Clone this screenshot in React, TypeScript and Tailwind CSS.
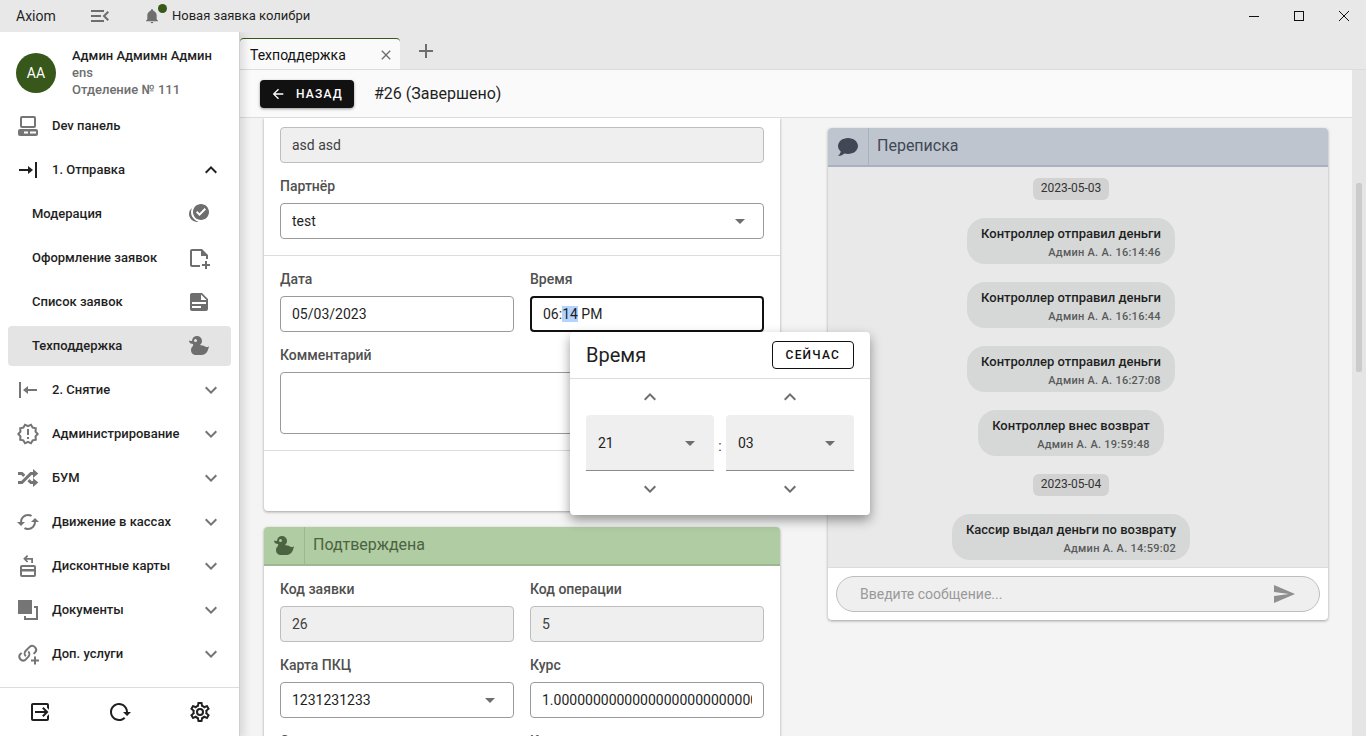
import React, { useEffect, useRef, useState } from 'react';

/**
 * ========================================
 * Icons (24x24)
 * ========================================
 */
const icons = {
  menuOpen: 'M21,15.61L19.59,17L14.58,12L19.59,7L21,8.39L17.44,12L21,15.61M3,6H16V8H3V6M3,13V11H13V13H3M3,18V16H16V18H3Z',
  bell: 'M21,19V20H3V19L5,17V11C5,7.9 7.03,5.17 10,4.29C10,4.19 10,4.1 10,4A2,2 0 0,1 12,2A2,2 0 0,1 14,4C14,4.1 14,4.19 14,4.29C16.97,5.17 19,7.9 19,11V17L21,19M14,21A2,2 0 0,1 12,23A2,2 0 0,1 10,21',
  desktop: 'M6,2H18A2,2 0 0,1 20,4V12A2,2 0 0,1 18,14H6A2,2 0 0,1 4,12V4A2,2 0 0,1 6,2M6,4V12H18V4H6M4,15H20A2,2 0 0,1 22,17V20A2,2 0 0,1 20,22H4A2,2 0 0,1 2,20V17A2,2 0 0,1 4,15M8,17.5V19.5H12V17.5H8M14,17.5V19.5H20V17.5H14Z',
  toRight: 'M3,11H12V8L17,12L12,16V13H3V11M19,4H21V20H19V4Z',
  fromRight: 'M21,11H12V8L7,12L12,16V13H21V11M3,4H5V20H3V4Z',
  checks: 'M14,2C18.42,2 22,5.58 22,10C22,14.42 18.42,18 14,18C9.58,18 6,14.42 6,10C6,5.58 9.58,2 14,2M12.5,14L19,7.5L17.6,6.1L12.5,11.2L10.4,9.1L9,10.5L12.5,14M5,6C4.4,7.2 4,8.6 4,10C4,14.6 7.2,18.5 11.5,19.7C10.9,19.9 10.2,20 9.5,20C5.2,19.3 2,15.9 2,12C2,9.6 3.2,7.4 5,6Z',
  notePlus: 'M5,3H15L21,9V13H19V10H14V5H5V19H13V21H5C3.89,21 3,20.1 3,19V5C3,3.89 3.89,3 5,3M18,15H20V18H23V20H20V23H18V20H15V18H18V15Z',
  noteText: 'M14,10H19.5L14,4.5V10M5,3H15L21,9V19A2,2 0 0,1 19,21H5C3.89,21 3,20.1 3,19V5C3,3.89 3.89,3 5,3M5,12V14H19V12H5M5,16V18H14V16H5Z',
  duck: 'M8.5,5A1.5,1.5 0 0,0 7,6.5A1.5,1.5 0 0,0 8.5,8A1.5,1.5 0 0,0 10,6.5A1.5,1.5 0 0,0 8.5,5M10,2A5,5 0 0,1 15,7C15,8.7 14.15,10.2 12.86,11.1C14.44,11.25 16.22,11.61 18,12.5C21,14 22,12 22,12C22,12 21,21 15,21H9C9,21 4,21 4,16C4,13 7,12 6,10C2,10 2,6.5 2,6.5C3,7 4.24,7 5,6.65C5.19,4.05 7.36,2 10,2Z',
  alert: 'M23,12L20.56,14.78L20.9,18.46L17.29,19.28L15.4,22.46L12,21L8.6,22.47L6.71,19.29L3.1,18.47L3.44,14.78L1,12L3.44,9.21L3.1,5.53L6.71,4.72L8.6,1.54L12,3L15.4,1.54L17.29,4.72L20.9,5.54L20.56,9.22L23,12M20.33,12L18.5,9.89L18.74,7.1L16,6.5L14.58,4.07L12,5.18L9.42,4.07L8,6.5L5.26,7.09L5.5,9.88L3.67,12L5.5,14.1L5.26,16.9L8,17.5L9.42,19.93L12,18.81L14.58,19.92L16,17.5L18.74,16.89L18.5,14.1L20.33,12M11,15H13V17H11V15M11,7H13V13H11V7',
  shuffle: 'M17,3L22.25,7.5L17,12L22.25,16.5L17,21V18H14.26L11.44,15.18L13.56,13.06L15.5,15H17V12L17,9H15.5L6.5,18H2V15H5.26L14.26,6H17V3M2,6H6.5L9.32,8.82L7.2,10.94L5.26,9H2V6Z',
  cached: 'M19,8L15,12H18A6,6 0 0,1 12,18C11,18 10.03,17.75 9.2,17.3L7.74,18.76C8.97,19.54 10.43,20 12,20A8,8 0 0,0 20,12H23M6,12A6,6 0 0,1 12,6C13,6 13.97,6.25 14.8,6.7L16.26,5.24C15.03,4.46 13.57,4 12,4A8,8 0 0,0 4,12H1L5,16L9,12',
  cardRefund: 'M6,11H18A2,2 0 0,1 20,13V21A2,2 0 0,1 18,23H6A2,2 0 0,1 4,21V13A2,2 0 0,1 6,11M6,13V15H18V13H6M6,17.5V21H18V17.5H6M11,1L12.2,2.2L10.6,3.9H17V9H15.2V5.7H10.6L12.2,7.4L11,8.6L7.2,4.8L11,1Z',
  bringFront: 'M2,2H16V16H2V2M22,8V22H8V18H10V20H20V10H18V8H22Z',
  exit: 'M14.08,15.59L16.67,13H7V11H16.67L14.08,8.41L15.5,7L20.5,12L15.5,17L14.08,15.59M19,3A2,2 0 0,1 21,5V9.67L19,7.67V5H5V19H19V16.33L21,14.33V19A2,2 0 0,1 19,21H5C3.89,21 3,20.1 3,19V5C3,3.89 3.89,3 5,3H19Z',
  reload: 'M2 12C2 16.97 6.03 21 11 21C13.39 21 15.68 20.06 17.4 18.4L15.9 16.9C14.63 18.25 12.86 19 11 19C4.76 19 1.64 11.46 6.05 7.05C10.46 2.64 18 5.77 18 12H15L19 16H19.1L23 12H20C20 7.03 15.97 3 11 3C6.03 3 2 7.03 2 12Z',
  cog: 'M12,8A4,4 0 0,1 16,12A4,4 0 0,1 12,16A4,4 0 0,1 8,12A4,4 0 0,1 12,8M12,10A2,2 0 0,0 10,12A2,2 0 0,0 12,14A2,2 0 0,0 14,12A2,2 0 0,0 12,10M10,22C9.75,22 9.54,21.82 9.5,21.58L9.13,18.93C8.5,18.68 7.96,18.34 7.44,17.94L4.95,18.95C4.73,19.03 4.46,18.95 4.34,18.73L2.34,15.27C2.21,15.05 2.27,14.78 2.46,14.63L4.57,12.97L4.5,12L4.57,11L2.46,9.37C2.27,9.22 2.21,8.95 2.34,8.73L4.34,5.27C4.46,5.05 4.73,4.96 4.95,5.05L7.44,6.05C7.96,5.66 8.5,5.32 9.13,5.07L9.5,2.42C9.54,2.18 9.75,2 10,2H14C14.25,2 14.46,2.18 14.5,2.42L14.87,5.07C15.5,5.32 16.04,5.66 16.56,6.05L19.05,5.05C19.27,4.96 19.54,5.05 19.66,5.27L21.66,8.73C21.79,8.95 21.73,9.22 21.54,9.37L19.43,11L19.5,12L19.43,13L21.54,14.63C21.73,14.78 21.79,15.05 21.66,15.27L19.66,18.73C19.54,18.95 19.27,19.04 19.05,18.95L16.56,17.95C16.04,18.34 15.5,18.68 14.87,18.93L14.5,21.58C14.46,21.82 14.25,22 14,22H10M11.25,4L10.88,6.61C9.68,6.86 8.62,7.5 7.85,8.39L5.44,7.35L4.69,8.65L6.8,10.2C6.4,11.37 6.4,12.64 6.8,13.8L4.68,15.36L5.43,16.66L7.86,15.62C8.63,16.5 9.68,17.14 10.87,17.38L11.24,20H12.76L13.13,17.39C14.32,17.14 15.37,16.5 16.14,15.62L18.57,16.66L19.32,15.36L17.2,13.81C17.6,12.64 17.6,11.37 17.2,10.2L19.31,8.65L18.56,7.35L16.15,8.39C15.38,7.5 14.32,6.86 13.12,6.62L12.75,4H11.25Z',
  chevronDown: 'M7.41,8.58L12,13.17L16.59,8.58L18,10L12,16L6,10L7.41,8.58Z',
  chevronUp: 'M7.41,15.41L12,10.83L16.59,15.41L18,14L12,8L6,14L7.41,15.41Z',
  arrowLeft: 'M20,11V13H8L13.5,18.5L12.08,19.92L4.16,12L12.08,4.08L13.5,5.5L8,11H20Z',
  menuDown: 'M7,10L12,15L17,10H7Z',
  close: 'M19,6.41L17.59,5L12,10.59L6.41,5L5,6.41L10.59,12L5,17.59L6.41,19L12,13.41L17.59,19L19,17.59L13.41,12L19,6.41Z',
  plus: 'M19,13H13V19H11V13H5V11H11V5H13V11H19V13Z',
  chat: 'M12,3C17.5,3 22,6.58 22,11C22,15.42 17.5,19 12,19C10.76,19 9.57,18.82 8.47,18.5C5.55,21 2,21 2,21C4.33,18.67 4.7,17.1 4.75,16.5C3.05,15.07 2,13.13 2,11C2,6.58 6.5,3 12,3Z',
  send: 'M2,21L23,12L2,3V10L17,12L2,14V21Z',
};

const Icon: React.FC<{ path: string; className?: string }> = ({ path, className = 'size-6' }) => (
  <svg viewBox="0 0 24 24" fill="currentColor" fillRule="evenodd" className={`shrink-0 ${className}`}>
    <path d={path} />
  </svg>
);

const LinkPlusIcon: React.FC = () => (
  <svg viewBox="0 0 24 24" fill="none" stroke="currentColor" strokeWidth="2" className="size-6 shrink-0">
    <path d="M9.8 14.2 A3.9 3.9 0 0 1 9.8 8.7 L13.6 4.9 A3.9 3.9 0 0 1 19.1 10.4 L17.6 11.9" />
    <path d="M12.2 9.4 A3.9 3.9 0 0 1 12.2 14.9 L9 18.1 A3.9 3.9 0 0 1 3.9 12.6 L5.6 10.9" />
    <path d="M19 14.5V22.5M15 18.5H23" />
  </svg>
);

/**
 * ========================================
 * Sidebar
 * ========================================
 */
const sections = [
  { title: '2. Снятие', icon: <Icon path={icons.fromRight} /> },
  { title: 'Администрирование', icon: <Icon path={icons.alert} /> },
  { title: 'БУМ', icon: <Icon path={icons.shuffle} /> },
  { title: 'Движение в кассах', icon: <Icon path={icons.cached} /> },
  { title: 'Дисконтные карты', icon: <Icon path={icons.cardRefund} /> },
  { title: 'Документы', icon: <Icon path={icons.bringFront} /> },
  { title: 'Доп. услуги', icon: <LinkPlusIcon /> },
];

const subItems = [
  { title: 'Модерация', path: icons.checks },
  { title: 'Оформление заявок', path: icons.notePlus },
  { title: 'Список заявок', path: icons.noteText },
  { title: 'Техподдержка', path: icons.duck },
];

const Sidebar: React.FC = () => {
  const [active, setActive] = useState('Техподдержка');

  return (
    <aside className="relative z-10 flex w-60 shrink-0 flex-col border-r border-[#d0d0d0] bg-white shadow-[4px_2px_8px_rgba(0,0,0,0.12)]">
      <div className="flex h-[74px] shrink-0 items-center gap-4 px-4 pt-2">
        <div className="flex size-10 items-center justify-center rounded-full bg-[#38571a] text-sm text-white">АА</div>
        <div className="pb-px text-[13px] leading-[17px] font-medium text-[#6e6e6e]">
          <div className="text-[#1f1f1f]">Админ Адмимн Админ</div>
          <div>ens</div>
          <div>Отделение № 111</div>
        </div>
      </div>

      <nav className="flex flex-1 flex-col gap-1 overflow-hidden px-2 text-[13px] font-medium text-[#1f1f1f]">
        <button className="flex h-10 shrink-0 items-center gap-3 px-2">
          <span className="text-[#757575]"><Icon path={icons.desktop} /></span>
          Dev панель
        </button>
        <button className="flex h-10 shrink-0 items-center gap-3 px-2">
          <Icon path={icons.toRight} />
          <span className="flex-1 text-left">1. Отправка</span>
          <Icon path={icons.chevronUp} />
        </button>
        {subItems.map((item) => (
          <button
            key={item.title}
            onClick={() => setActive(item.title)}
            className={`flex h-10 shrink-0 items-center justify-between rounded pr-5 pl-6 ${
              active === item.title ? 'bg-[#e4e4e4]' : ''
            }`}
          >
            {item.title}
            <span className="text-[#6e6e6e]"><Icon path={item.path} /></span>
          </button>
        ))}
        {sections.map((section) => (
          <button key={section.title} className="flex h-10 shrink-0 items-center gap-3 px-2">
            <span className="text-[#757575]">{section.icon}</span>
            <span className="flex-1 text-left">{section.title}</span>
            <span className="text-[#757575]"><Icon path={icons.chevronDown} /></span>
          </button>
        ))}
      </nav>

      <div className="flex h-[49px] shrink-0 items-center justify-between border-t border-[#dcdcdc] pr-[27px] pl-7 text-[#1f1f1f]">
        <button aria-label="Выход"><Icon path={icons.exit} /></button>
        <button aria-label="Обновить"><Icon path={icons.reload} /></button>
        <button aria-label="Настройки"><Icon path={icons.cog} /></button>
      </div>
    </aside>
  );
};

/**
 * ========================================
 * Form fields
 * ========================================
 */
const labelClass = 'mb-[6px] block text-sm leading-[22px] font-medium text-[#505050]';
const inputClass =
  'block h-9 w-full rounded border border-[#9a9a9a] bg-white px-[11px] text-sm text-[#1f1f1f] outline-none disabled:border-[#bdbdbd] disabled:bg-[#efefef] disabled:text-[#404040]';

const TextField: React.FC<{ id: string; label: string; value: string; disabled?: boolean }> = ({
  id,
  label,
  value,
  disabled,
}) => (
  <div>
    <label htmlFor={id} className={labelClass}>{label}</label>
    <input id={id} type="text" defaultValue={value} disabled={disabled} className={inputClass} />
  </div>
);

const SelectField: React.FC<{ id: string; label: string; value: string }> = ({ id, label, value }) => (
  <div>
    <label htmlFor={id} className={labelClass}>{label}</label>
    <div className="relative">
      <select id={id} className={`${inputClass} appearance-none`}>
        <option>{value}</option>
      </select>
      <Icon path={icons.menuDown} className="pointer-events-none absolute top-1.5 right-3 size-6 text-[#6e6e6e]" />
    </div>
  </div>
);

const TimeColumn: React.FC<{ label: string; value: string }> = ({ label, value }) => (
  <div className="flex flex-1 flex-col items-center">
    <button aria-label={`${label} +`} className="flex h-9 items-center text-[#6e6e6e]">
      <Icon path={icons.chevronUp} />
    </button>
    <div className="relative w-full">
      <select
        aria-label={label}
        className="block h-14 w-full appearance-none rounded-t border-b border-[#8a8a8a] bg-[#efefef] px-3 text-sm text-[#1f1f1f] outline-none"
      >
        <option>{value}</option>
      </select>
      <Icon path={icons.menuDown} className="pointer-events-none absolute top-4 right-3 size-6 text-[#6e6e6e]" />
    </div>
    <button aria-label={`${label} -`} className="flex h-9 items-center text-[#6e6e6e]">
      <Icon path={icons.chevronDown} />
    </button>
  </div>
);

const TimeField: React.FC = () => {
  const ref = useRef<HTMLInputElement>(null);

  useEffect(() => {
    ref.current?.focus();
    ref.current?.setSelectionRange(3, 5);
  }, []);

  return (
    <div>
      <label htmlFor="time" className={labelClass}>Время</label>
      <div className="relative">
        <input
          id="time"
          ref={ref}
          type="text"
          defaultValue="06:14 PM"
          className="block h-9 w-full rounded border-2 border-[#111] bg-white px-[11px] text-sm text-[#1f1f1f] outline-none selection:bg-[#b3d4ff] selection:text-[#1f1f1f]"
        />
        <div className="absolute top-full left-10 z-20 w-[300px] rounded bg-white shadow-[0_5px_12px_rgba(0,0,0,0.4)]">
          <div className="flex h-[47px] items-center justify-between border-b border-[#dcdcdc] px-4">
            <h2 className="text-xl text-[#1f1f1f]">Время</h2>
            <button className="h-7 rounded border border-[#111] px-[13px] text-xs font-medium tracking-widest text-[#111]">
              СЕЙЧАС
            </button>
          </div>
          <div className="flex items-center px-4 pb-2">
            <TimeColumn label="Часы" value="21" />
            <span className="w-3 pt-1.5 text-center text-sm text-[#404040]">:</span>
            <TimeColumn label="Минуты" value="03" />
          </div>
        </div>
      </div>
    </div>
  );
};

/**
 * ========================================
 * Chat
 * ========================================
 */
const chatDays = [
  {
    date: '2023-05-03',
    messages: [
      { text: 'Контроллер отправил деньги', time: '16:14:46' },
      { text: 'Контроллер отправил деньги', time: '16:16:44' },
      { text: 'Контроллер отправил деньги', time: '16:27:08' },
      { text: 'Контроллер внес возврат', time: '19:59:48' },
    ],
  },
  {
    date: '2023-05-04',
    messages: [{ text: 'Кассир выдал деньги по возврату', time: '14:59:02' }],
  },
];

const Chat: React.FC = () => (
  <section className="mt-2.5 w-[500px] shrink-0 self-start overflow-hidden rounded bg-white shadow-[0_1px_3px_rgba(0,0,0,0.35)]">
    <header className="flex h-[39px] border-b-2 border-[#a8b1be] bg-[#bec5cf] text-[#3f4854]">
      <div className="flex w-[41px] items-center justify-center border-r border-[#a8b1be]">
        <Icon path={icons.chat} />
      </div>
      <h2 className="px-2 text-base leading-9">Переписка</h2>
    </header>
    <div className="flex flex-col items-center gap-[18px] bg-[#e9e9e9] pt-[11px] pr-3.5 pb-[7px]">
      {chatDays.map((day) => (
        <React.Fragment key={day.date}>
          <div className="h-[22px] rounded-md bg-[#d2d2d2] px-2 text-xs leading-[21px] text-[#333]">{day.date}</div>
          {day.messages.map((m) => (
            <div key={m.time} className="rounded-[18px] bg-[#d5d8d7] px-3.5 pt-1.5 pb-0.5 text-right font-medium">
              <div className="text-[13px] leading-5 text-[#1f1f1f]">{m.text}</div>
              <div className="text-[11px] leading-[18px] tracking-wide text-[#5a5a5a]">Админ А. А. {m.time}</div>
            </div>
          ))}
        </React.Fragment>
      ))}
    </div>
    <form className="border-t border-[#dcdcdc] p-2" onSubmit={(e) => e.preventDefault()}>
      <div className="flex h-9 items-center justify-between rounded-full border border-[#bdbdbd] bg-[#efefef] px-[23px] text-[#8f8f8f]">
        <input
          type="text"
          aria-label="Сообщение"
          placeholder="Введите сообщение..."
          className="min-w-0 flex-1 bg-transparent text-sm outline-none placeholder:text-[#999]"
        />
        <button aria-label="Отправить"><Icon path={icons.send} /></button>
      </div>
    </form>
  </section>
);

/**
 * ========================================
 * Main App
 * ========================================
 */
const App: React.FC = () => {
  return (
    <div className="flex h-screen flex-col overflow-hidden bg-[#e8e8e8] font-[Roboto,'Noto_Sans',sans-serif]">
      {/* Title bar */}
      <div className="flex h-8 shrink-0 items-center text-[#1f1f1f]">
        <span className="w-[88px] pl-4 text-sm">Axiom</span>
        <button aria-label="Меню" className="text-[#6e6e6e]"><Icon path={icons.menuOpen} /></button>
        <div className="ml-8 flex items-center gap-3 text-[13px]">
          <span className="relative text-[#6e6e6e]">
            <Icon path={icons.bell} className="size-4" />
            <span className="absolute -top-1 -right-[7px] size-[9px] rounded-full bg-[#38571a]" />
          </span>
          Новая заявка колибри
        </div>
        <div className="ml-auto flex">
          <button aria-label="Свернуть" className="flex h-8 w-[45px] items-center justify-center">
            <span className="h-px w-2.5 bg-[#111]" />
          </button>
          <button aria-label="Развернуть" className="flex h-8 w-[45px] items-center justify-center">
            <span className="size-2.5 border border-[#111]" />
          </button>
          <button aria-label="Закрыть" className="flex h-8 w-[45px] items-center justify-center">
            <svg viewBox="0 0 10 10" className="size-2.5" stroke="#111" strokeWidth="1">
              <path d="M0 0L10 10M10 0L0 10" />
            </svg>
          </button>
        </div>
      </div>

      <div className="flex min-h-0 flex-1 overflow-hidden">
        <Sidebar />

        <main className="flex min-w-0 flex-1 flex-col">
          {/* Tabs */}
          <div className="flex h-[38px] shrink-0 items-end border-b border-[#dcdcdc]">
            <div className="flex h-[31px] w-40 items-center justify-between rounded-t border-t border-[#38571a] bg-[#fafafa] pt-0.5 pr-1 pl-2.5 text-sm text-[#111]">
              Техподдержка
              <button aria-label="Закрыть вкладку" className="p-0.5 text-[#6e6e6e]">
                <Icon path={icons.close} className="size-4" />
              </button>
            </div>
            <button aria-label="Новая вкладка" className="mb-1.5 ml-3.5 text-[#6e6e6e]">
              <Icon path={icons.plus} />
            </button>
          </div>

          <div className="flex min-h-0 flex-1">
            <div className="flex min-w-0 flex-1 flex-col">
              {/* Page header */}
              <div className="flex h-12 shrink-0 items-center gap-5 border-b border-[#dcdcdc] bg-[#fafafa] px-5">
                <button className="flex h-7 items-center gap-2.5 rounded bg-[#111] pr-[11px] pl-2.5 text-xs font-medium tracking-widest text-white shadow-[0_1px_3px_rgba(0,0,0,0.4)]">
                  <Icon path={icons.arrowLeft} className="size-4" />
                  НАЗАД
                </button>
                <h1 className="text-base text-[#1f1f1f]">#26 (Завершено)</h1>
              </div>

              <div className="flex min-h-0 flex-1 items-start gap-12 overflow-hidden bg-[#f4f4f4] px-6">
                <div className="flex min-w-0 flex-1 flex-col gap-4">
                  <section className="rounded-b bg-white shadow-[0_1px_3px_rgba(0,0,0,0.35)]">
                    <div className="flex flex-col gap-3 border-b border-[#dcdcdc] px-4 pt-[9px] pb-4">
                      <input
                        type="text"
                        aria-label="Клиент"
                        defaultValue="asd asd"
                        disabled
                        className={inputClass}
                      />
                      <SelectField id="partner" label="Партнёр" value="test" />
                    </div>
                    <div className="grid grid-cols-2 gap-x-4 gap-y-3 border-b border-[#dcdcdc] px-4 pt-3 pb-4">
                      <TextField id="date" label="Дата" value="05/03/2023" />
                      <TimeField />
                      <div className="col-span-2">
                        <label htmlFor="comment" className={labelClass}>Комментарий</label>
                        <textarea
                          id="comment"
                          className="block h-[62px] w-full resize-none rounded border border-[#9a9a9a] bg-white p-2.5 text-sm outline-none"
                        />
                      </div>
                    </div>
                    <div className="h-[60px]" />
                  </section>

                  <section className="overflow-hidden rounded bg-white shadow-[0_1px_3px_rgba(0,0,0,0.35)]">
                    <header className="flex h-[39px] border-b-2 border-[#9cb890] bg-[#b0cca3] text-[#4b6340]">
                      <div className="flex w-[41px] items-center justify-center border-r border-[#9cb890]">
                        <Icon path={icons.duck} />
                      </div>
                      <h2 className="px-2 text-base leading-9">Подтверждена</h2>
                    </header>
                    <div className="grid grid-cols-2 gap-x-4 gap-y-3 px-4 py-3">
                      <TextField id="code" label="Код заявки" value="26" disabled />
                      <TextField id="operation" label="Код операции" value="5" disabled />
                      <SelectField id="card" label="Карта ПКЦ" value="1231231233" />
                      <TextField id="rate" label="Курс" value="1.00000000000000000000000000" />
                      <TextField id="sum" label="Сумма" value="0" />
                      <TextField id="fee" label="Комиссия" value="0" />
                    </div>
                  </section>
                </div>

                <Chat />
              </div>
            </div>

            {/* Scroll track */}
            <div className="w-3.5 shrink-0 bg-[#e5e5e5] pt-[113px]">
              <div className="ml-1 h-[189px] w-1.5 rounded-xs bg-[#cbcbcb]" />
            </div>
          </div>
        </main>
      </div>
    </div>
  );
};

export default App;
